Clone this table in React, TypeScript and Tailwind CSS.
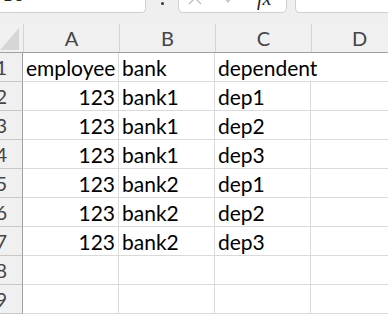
import React from 'react'

const rows: string[][] = [
  ['employee', 'bank', 'dependent'],
  ['123', 'bank1', 'dep1'],
  ['123', 'bank1', 'dep2'],
  ['123', 'bank1', 'dep3'],
  ['123', 'bank2', 'dep1'],
  ['123', 'bank2', 'dep2'],
  ['123', 'bank2', 'dep3'],
  ['', '', ''],
  ['', '', ''],
]

const font = { fontFamily: 'Lato, "Noto Sans", sans-serif' }

const App: React.FC = () => {
  return (
    <div className="w-[388px] h-[321px] overflow-hidden bg-white text-[#000]" style={font}>
      {/* Formula bar strip - cut off at the top */}
      <div className="h-[24px] bg-[#efefef] flex items-start overflow-hidden">
        <div className="-mt-[14px] -ml-[6px] w-[152px] h-[27px] bg-white border border-[#cfcfcf] rounded-[4px] flex items-end justify-between px-[8px] pb-[9px] flex-shrink-0">
          <span className="text-[17px] leading-none text-[#222]">B8</span>
          <svg width="10" height="6" viewBox="0 0 10 6" className="mb-[8px] mr-[2px]">
            <path d="M2 1 L5 4 L8 1" stroke="#333" strokeWidth="1.6" fill="none" />
          </svg>
        </div>
        <div className="w-[32px] flex justify-center flex-shrink-0">
          <div className="w-[3px] h-[3px] mt-[2px] bg-[#333] rounded-full" />
        </div>
        <div className="-mt-[14px] w-[109px] h-[27px] bg-white border border-[#cfcfcf] rounded-[5px] flex items-end pl-[9px] pb-[7px] flex-shrink-0">
          {/* cancel (x) */}
          <svg width="14" height="14" viewBox="0 0 14 14">
            <path d="M1 1 L13 13 M13 1 L1 13" stroke="#bdbdbd" strokeWidth="1.3" fill="none" />
          </svg>
          {/* enter (check) */}
          <svg width="14" height="10" viewBox="0 0 14 10" className="ml-[20px] mb-[1px]">
            <path d="M1 2 L6 8 L13 -2" stroke="#bdbdbd" strokeWidth="1.3" fill="none" />
          </svg>
          <span className="ml-[21px] text-[20px] leading-[14px] italic text-[#222]" style={{ fontFamily: '"Liberation Serif", serif' }}>fx</span>
        </div>
        <div className="-mt-[14px] ml-[8px] flex-1 h-[27px] bg-white border border-[#cfcfcf] border-r-0 rounded-l-[5px]" />
      </div>

      {/* Column headers */}
      <div className="flex h-[29px] bg-[#f0f0f0] border-b border-[#a0a0a0]">
        <div className="w-[23px] flex-shrink-0 flex items-end justify-end pb-[2px] pr-[4px]">
          <svg width="19" height="22" viewBox="0 0 19 22">
            <polygon points="19,0 19,22 0,22" fill="#d6d6d6" />
          </svg>
        </div>
        {['A', 'B', 'C', 'D'].map((c) => (
          <div
            key={c}
            className="w-[96px] flex-shrink-0 flex items-center justify-center border-l border-[#d4d4d4] text-[20px] text-[#444]"
          >
            {c}
          </div>
        ))}
      </div>

      {/* Rows */}
      {rows.map((r, i) => (
        <div key={i} className="flex h-[29px]">
          <div className="w-[23px] flex-shrink-0 bg-[#f0f0f0] border-r border-b border-[#c8c8c8] border-r-[#a0a0a0] flex items-center justify-end pr-[15px] text-[20px] text-[#444] overflow-hidden">
            {i + 1}
          </div>
          {[0, 1, 2, 3].map((j) => {
            const v = j < 3 ? r[j] : ''
            const num = /^\d+$/.test(v)
            const spill = i === 0 && j === 2
            return (
              <div
                key={j}
                className={
                  'w-[96px] flex-shrink-0 border-b border-[#dadada] flex items-center text-[21px] whitespace-nowrap px-[3px] pt-[1px] ' +
                  (spill ? 'border-r-0 overflow-visible ' : 'border-r ') +
                  (num ? 'justify-end' : 'justify-start')
                }
              >
                {v}
              </div>
            )
          })}
        </div>
      ))}
    </div>
  )
}

export default App
